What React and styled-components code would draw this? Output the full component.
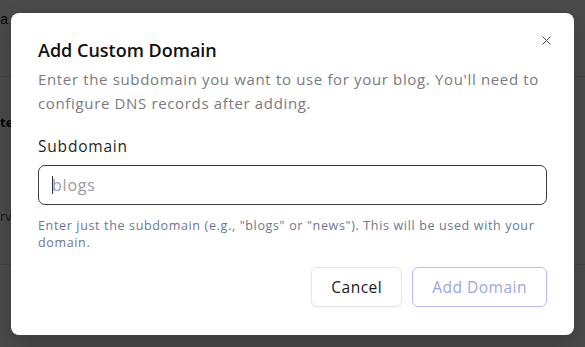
import React from 'react'
import styled, { createGlobalStyle } from 'styled-components'
import { X } from 'lucide-react'

const Global = createGlobalStyle`
  html, body { margin: 0; padding: 0; }
  body {
    width: 585px;
    height: 347px;
    overflow: hidden;
    font-family: "Open Sans", "Noto Sans", sans-serif;
  }
`

const Page = styled.div`
  position: relative;
  width: 585px;
  height: 347px;
  background: #fff;
  overflow: hidden;
`

const BgRow = styled.div`
  height: ${p => p.h}px;
  border-bottom: 1px solid ${p => p.line ? '#e2e2e2' : 'transparent'};
  display: flex;
  align-items: ${p => p.align || 'center'};
  font-family: "Liberation Mono", monospace;
  font-size: 14px;
  color: #222;
`

const BgLabel = styled.span`
  font-family: "Open Sans", sans-serif;
  font-weight: ${p => p.bold ? 700 : 400};
  font-size: 13px;
  color: ${p => p.bold ? '#111' : '#555'};
`

const Overlay = styled.div`
  position: absolute;
  inset: 0;
  background: rgba(0, 0, 0, 0.71);
  display: flex;
  align-items: flex-start;
  justify-content: center;
  padding-top: 13px;
`

const Dialog = styled.div`
  position: relative;
  width: 563px;
  box-sizing: border-box;
  background: #fff;
  border-radius: 8px;
  padding: 24px 27px 28px 27px;
  box-shadow: 0 10px 25px rgba(0, 0, 0, 0.2);
`

const Close = styled.button`
  position: absolute;
  top: 20px;
  right: 20px;
  border: none;
  background: none;
  padding: 0;
  display: flex;
  color: #4a4a4a;
`

const Title = styled.h2`
  margin: 0;
  font-size: 18px;
  font-weight: 600;
  line-height: 26px;
  color: #111;
`

const Desc = styled.p`
  margin: 4px 0 0;
  font-size: 15px;
  letter-spacing: 0.65px;
  line-height: 24px;
  color: #7a7a80;
`

const Label = styled.label`
  display: block;
  margin-top: 21px;
  font-size: 15.5px;
  letter-spacing: 0.8px;
  font-weight: 500;
  line-height: 20px;
  color: #1f1f1f;
`

const Input = styled.div`
  margin-top: 9px;
  height: 40px;
  box-sizing: border-box;
  border: 1px solid #3c3c3c;
  border-radius: 7px;
  display: flex;
  align-items: center;
  padding-left: 13px;
  font-size: 16px;
  letter-spacing: 0.8px;
  color: #9a9a9a;
`

const Caret = styled.span`
  width: 1px;
  height: 18px;
  background: #333;
  margin-right: -1px;
`

const Hint = styled.p`
  margin: 12px 0 0;
  font-size: 12.5px;
  letter-spacing: 0.65px;
  line-height: 17px;
  color: #6b7790;
`

const Actions = styled.div`
  margin-top: 16px;
  display: flex;
  justify-content: flex-end;
  gap: 10px;
`

const Button = styled.button`
  height: 40px;
  box-sizing: border-box;
  padding: 0 19px;
  border-radius: 6px;
  background: #fff;
  font-family: inherit;
  font-size: 15.5px;
  letter-spacing: 0.5px;
  font-weight: 500;
  border: 1px solid ${p => p.primary ? '#b2bef5' : '#e6e6e6'};
  color: ${p => p.primary ? '#9aa6e6' : '#1a1a1a'};
  box-shadow: ${p => p.primary ? 'none' : '0 1px 2px rgba(0,0,0,0.05)'};
`

export default function App() {
  return (
    <>
      <Global />
      <Page>
        <BgRow h={28} align="flex-end">a 1070 - 000 - bef1 b 0086 the main ... and binds</BgRow>
        <BgRow h={47} line />
        <BgRow h={90}><BgLabel bold>te</BgLabel></BgRow>
        <BgRow h={96} line><BgLabel>rv</BgLabel></BgRow>
        <Overlay>
          <Dialog>
            <Close aria-label="Close"><X size={15} strokeWidth={1.6} /></Close>
            <Title>Add Custom Domain</Title>
            <Desc>Enter the subdomain you want to use for your blog. You'll need to configure DNS records after adding.</Desc>
            <Label>Subdomain</Label>
            <Input><Caret />blogs</Input>
            <Hint>Enter just the subdomain (e.g., "blogs" or "news"). This will be used with your domain.</Hint>
            <Actions>
              <Button>Cancel</Button>
              <Button primary>Add Domain</Button>
            </Actions>
          </Dialog>
        </Overlay>
      </Page>
    </>
  )
}
